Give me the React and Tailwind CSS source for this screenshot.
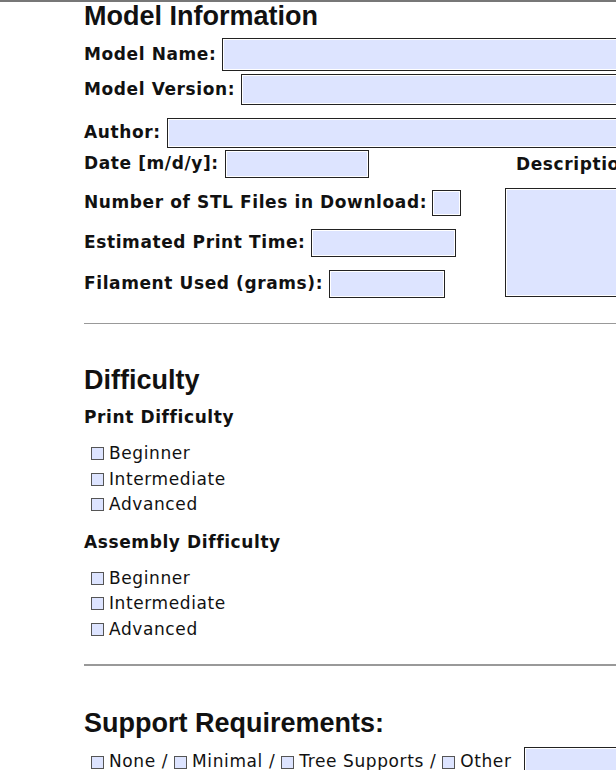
const inp = "bg-[#dde4ff] border border-[#222] shadow-[inset_0_0_0_1px_#fff]";
const lab = "font-bold text-[17px] tracking-[0.6px] text-[#111] whitespace-nowrap";
const hf = { fontFamily: '"Liberation Sans", Arial, sans-serif' };
function Box() {
  return <span className="w-[13px] h-[13px] border border-[#555] bg-[#dde4ff] mr-[5px] shrink-0" />;
}
function Cb({ t }) {
  return (
    <div className="flex items-center h-[25.5px]">
      <Box />
      <span className="text-[17px] tracking-[0.6px] text-[#111]">{t}</span>
    </div>
  );
}
export default function App() {
  return (
    <div className="w-[616px] h-[770px] overflow-hidden bg-white border-t-2 border-[#777]" style={{ fontFamily: '"DejaVu Sans", sans-serif' }}>
      <div className="ml-[84px] w-[700px]">
        <h1 className="text-[27px] font-bold leading-[26px] mt-[1px] text-[#111]" style={hf}>Model Information</h1>
        <div className="flex items-center mt-[9px] h-[33px]"><span className={lab}>Model Name:</span><div className={inp + " ml-[6px] w-[500px] h-[33px]"} /></div>
        <div className="flex items-center mt-[3px] h-[31px]"><span className={lab}>Model Version:</span><div className={inp + " ml-[6px] w-[500px] h-[31px]"} /></div>
        <div className="flex items-center mt-[13px] h-[30px]"><span className={lab}>Author:</span><div className={inp + " ml-[6px] w-[500px] h-[30px]"} /></div>
        <div className="flex">
          <div className="w-[421px]">
            <div className="flex items-center mt-[2px] h-[28px]"><span className={lab}>Date [m/d/y]:</span><div className={inp + " ml-[6px] w-[144px] h-[28px]"} /></div>
            <div className="flex items-center mt-[12px] h-[26px]"><span className={lab}>Number of STL Files in Download:</span><div className={inp + " ml-[5px] w-[29px] h-[26px]"} /></div>
            <div className="flex items-center mt-[13px] h-[28px]"><span className={lab}>Estimated Print Time:</span><div className={inp + " ml-[5px] w-[145px] h-[28px]"} /></div>
            <div className="flex items-center mt-[13px] h-[28px]"><span className={lab}>Filament Used (grams):</span><div className={inp + " ml-[6px] w-[116px] h-[28px]"} /></div>
          </div>
          <div>
            <div className={lab + " mt-[4px] ml-[11px]"}>Description</div>
            <div className={inp + " mt-[10px] w-[200px] h-[109px]"} />
          </div>
        </div>
        <hr className="mt-[25px] border-t border-[#999] w-[600px]" />
        <h2 className="text-[27px] font-bold mt-[42px] leading-[28px] text-[#111]" style={hf}>Difficulty</h2>
        <div className={lab + " mt-[13px] leading-[20px]"}>Print Difficulty</div>
        <div className="ml-[7px] mt-[14px]"><Cb t="Beginner" /><Cb t="Intermediate" /><Cb t="Advanced" /></div>
        <div className={lab + " mt-[14px] leading-[20px]"}>Assembly Difficulty</div>
        <div className="ml-[7px] mt-[14px]"><Cb t="Beginner" /><Cb t="Intermediate" /><Cb t="Advanced" /></div>
        <hr className="mt-[22px] border-t-2 border-[#999] w-[600px]" />
        <h2 className="text-[27px] font-bold mt-[43px] leading-[28px] text-[#111]" style={hf}>Support Requirements:</h2>
        <div className="flex items-center ml-[7px] mt-[10px] text-[17px] tracking-[0.6px] text-[#111] whitespace-nowrap">
          <Box />None /&nbsp;
          <Box />Minimal /&nbsp;
          <Box />Tree Supports /&nbsp;
          <Box />Other
          <div className={inp + " ml-[12px] w-[120px] h-[30px]"} />
        </div>
      </div>
    </div>
  );
}
